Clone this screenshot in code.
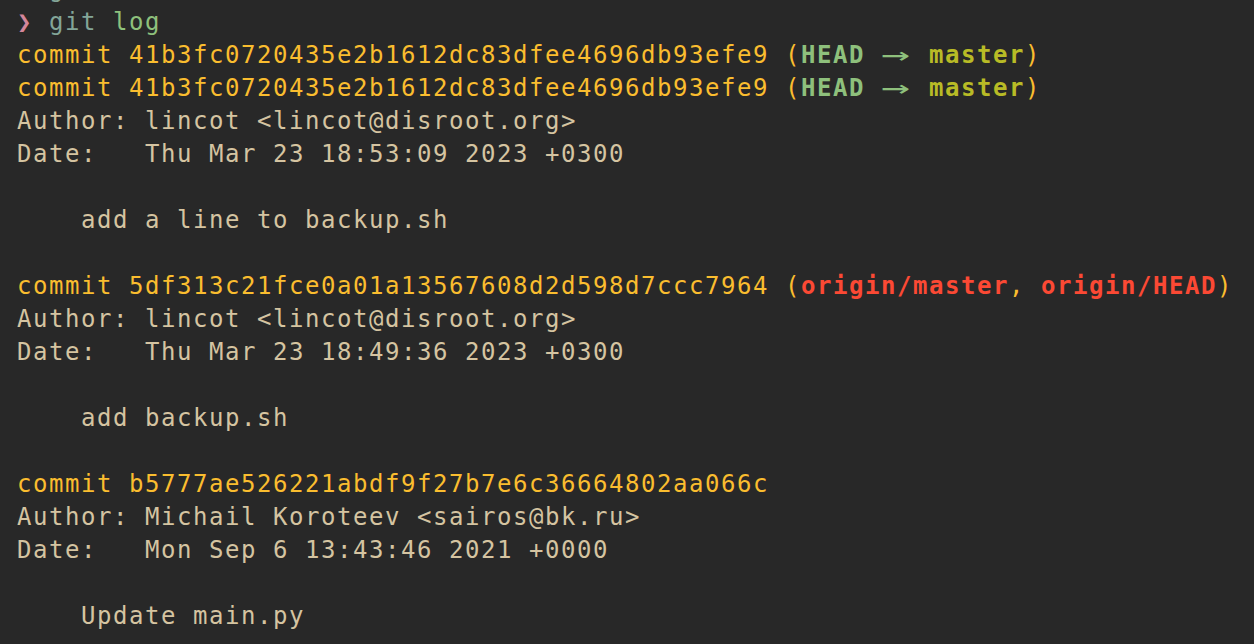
import React from "react";

const Y = "text-[#fabd2f]";
const T = "text-[#d5c4a1]";

function Arrow() {
  return (
    <span className="inline-block w-[32px] text-center">
      <span className="inline-block scale-x-[2] scale-y-[1.15] font-normal">→</span>
    </span>
  );
}

function Line({ children }) {
  return <div className="h-[33px] leading-[33px] whitespace-pre">{children}</div>;
}

export default function App() {
  return (
    <div
      className="h-screen w-full overflow-hidden bg-[#282828] text-[24px] tracking-[1.55px]"
      style={{ fontFamily: '"DejaVu Sans Mono", monospace' }}
    >
      <div className="-mt-[27px] pl-[17px]">
        <Line>
          <span className="text-[#83a598]">~/git/</span>
        </Line>
        <Line>
          <span className="text-[#d3869b]">❯</span>
          <span className="text-[#83a598]"> git</span>
          <span className="text-[#8ec07c]"> log</span>
        </Line>
        <Line>
          <span className={Y}>commit 41b3fc0720435e2b1612dc83dfee4696db93efe9 (</span>
          <span className="font-bold text-[#8ec07c]">HEAD </span>
          <span className="font-bold text-[#8ec07c]"><Arrow /></span>
          <span className="font-bold text-[#b8bb26]"> master</span>
          <span className={Y}>)</span>
        </Line>
        <Line>
          <span className={Y}>commit 41b3fc0720435e2b1612dc83dfee4696db93efe9 (</span>
          <span className="font-bold text-[#8ec07c]">HEAD </span>
          <span className="font-bold text-[#8ec07c]"><Arrow /></span>
          <span className="font-bold text-[#b8bb26]"> master</span>
          <span className={Y}>)</span>
        </Line>
        <Line><span className={T}>Author: lincot &lt;lincot@disroot.org&gt;</span></Line>
        <Line><span className={T}>Date:   Thu Mar 23 18:53:09 2023 +0300</span></Line>
        <Line> </Line>
        <Line><span className={T}>    add a line to backup.sh</span></Line>
        <Line> </Line>
        <Line>
          <span className={Y}>commit 5df313c21fce0a01a13567608d2d598d7ccc7964 (</span>
          <span className="font-bold text-[#fb4934]">origin/master</span>
          <span className={Y}>, </span>
          <span className="font-bold text-[#fb4934]">origin/HEAD</span>
          <span className={Y}>)</span>
        </Line>
        <Line><span className={T}>Author: lincot &lt;lincot@disroot.org&gt;</span></Line>
        <Line><span className={T}>Date:   Thu Mar 23 18:49:36 2023 +0300</span></Line>
        <Line> </Line>
        <Line><span className={T}>    add backup.sh</span></Line>
        <Line> </Line>
        <Line><span className={Y}>commit b5777ae526221abdf9f27b7e6c36664802aa066c</span></Line>
        <Line><span className={T}>Author: Michail Koroteev &lt;sairos@bk.ru&gt;</span></Line>
        <Line><span className={T}>Date:   Mon Sep 6 13:43:46 2021 +0000</span></Line>
        <Line> </Line>
        <Line><span className={T}>    Update main.py</span></Line>
      </div>
    </div>
  );
}
